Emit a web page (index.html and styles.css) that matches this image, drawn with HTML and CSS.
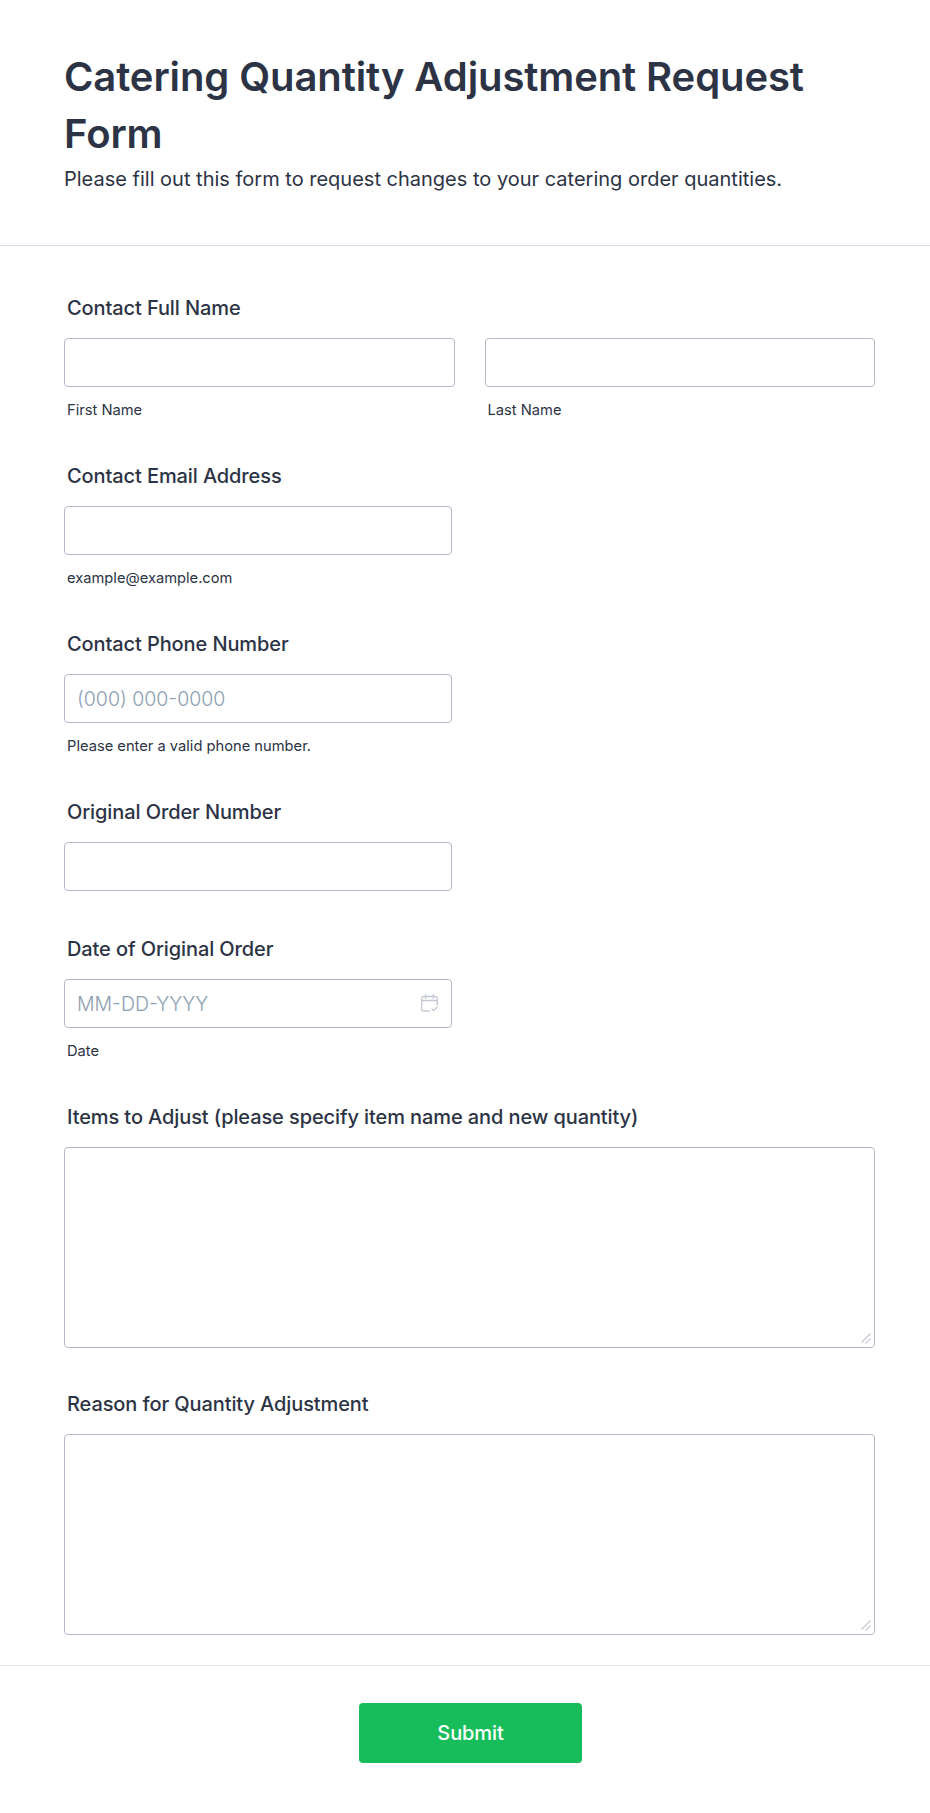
FILE: index.html
```html
<!DOCTYPE html>
<html lang="en">

<head>
  <meta charset="UTF-8">
  <meta name="viewport" content="width=device-width, initial-scale=1.0">
  <title>Catering Quantity Adjustment Request Form</title>
  <link rel="stylesheet" href="styles.css">
</head>

<body>

  <form id="form">
    <div class="header">
      <h1>Catering Quantity Adjustment Request Form</h1>
      <p>Please fill out this form to request changes to your catering order quantities.</p>
    </div>

    <div class="fields">
      <div class="field">
        <label class="label">Contact Full Name</label>
        <div class="name-row">
          <div class="name-col">
            <input type="text" class="input">
            <span class="sub">First Name</span>
          </div>
          <div class="name-col">
            <input type="text" class="input">
            <span class="sub">Last Name</span>
          </div>
        </div>
      </div>

      <div class="field">
        <label class="label">Contact Email Address</label>
        <input type="email" class="input short">
        <span class="sub">example@example.com</span>
      </div>

      <div class="field">
        <label class="label">Contact Phone Number</label>
        <input type="tel" class="input short" placeholder="(000) 000-0000">
        <span class="sub">Please enter a valid phone number.</span>
      </div>

      <div class="field no-sub">
        <label class="label">Original Order Number</label>
        <input type="text" class="input short">
      </div>

      <div class="field">
        <label class="label">Date of Original Order</label>
        <div class="date-wrap">
          <input type="text" class="input short" placeholder="MM-DD-YYYY">
          <svg class="date-icon" width="17" height="18" viewBox="0 0 17 18" fill="none" stroke="#c3c7d4" stroke-width="1.3" stroke-linecap="round" stroke-linejoin="round">
            <path d="M8.500 17H2.500A1.800 1.800 0 0 1 .7 15.200V4.300A1.800 1.800 0 0 1 2.500 2.500h12a1.800 1.800 0 0 1 1.800 1.800V11"/>
            <path d="M.7 6.500h15.600"/>
            <path d="M4.800.7v3.600M12.200.7v3.600"/>
            <path d="M11 15l1.600 1.600 3.400-3.400"/>
          </svg>
        </div>
        <span class="sub">Date</span>
      </div>

      <div class="field">
        <label class="label">Items to Adjust (please specify item name and new quantity)</label>
        <div class="area-wrap">
          <textarea class="input area"></textarea>
          <svg class="grip" width="10" height="11" viewBox="0 0 10 11" fill="none" stroke="#c3c7d4" stroke-width="1.2">
            <path d="M9.500 .5l-9 9M9.500 5.500l-5 5"/>
          </svg>
        </div>
      </div>

      <div class="field">
        <label class="label">Reason for Quantity Adjustment</label>
        <div class="area-wrap">
          <textarea class="input area"></textarea>
          <svg class="grip" width="10" height="11" viewBox="0 0 10 11" fill="none" stroke="#c3c7d4" stroke-width="1.2">
            <path d="M9.500 .5l-9 9M9.500 5.500l-5 5"/>
          </svg>
        </div>
      </div>
    </div>

    <div class="footer">
      <button type="button" class="submit">Submit</button>
    </div>
  </form>

</body>

</html>
```

FILE: styles.css
```css
* {
  box-sizing: border-box;
}

body {
  margin: 0;
  font-family: Inter, "Liberation Sans", sans-serif;
  background-color: #fff;
  color: #2c3345;
}

.header {
  padding: 48px 64px 51px;
  border-bottom: 1px solid #d8dae9;
}

h1 {
  margin: 0;
  font-size: 40px;
  font-weight: 600;
  line-height: 57px;
  letter-spacing: -0.1px;
}

.header p {
  margin: 2px 0 0;
  font-size: 20px;
  line-height: 30px;
}

.fields {
  padding: 48px 55px 30px 64px;
  display: flex;
  flex-direction: column;
  gap: 42px;
}

.field {
  display: flex;
  flex-direction: column;
  align-items: flex-start;
}

.no-sub {
  margin-bottom: 2px;
}

.label {
  margin: 0 0 16px 3px;
  font-size: 20px;
  font-weight: 500;
  line-height: 28px;
  letter-spacing: -0.1px;
}

.input {
  display: block;
  width: 100%;
  height: 49px;
  padding: 0 12px;
  font-family: inherit;
  font-size: 19.500px;
  color: #2c3345;
  background-color: #fff;
  border: 1px solid #b4b9c9;
  border-radius: 4px;
  outline: none;
}

.input::placeholder {
  color: #8c9eb0;
  font-weight: 300;
}

.short {
  width: 388px;
}

.area {
  width: 100%;
  height: 201px;
  resize: none;
}

.area-wrap {
  position: relative;
  width: 100%;
}

.grip {
  position: absolute;
  right: 4px;
  bottom: 4px;
}

.name-row {
  display: flex;
  gap: 30px;
  width: 100%;
}

.name-col {
  flex: 1;
}

.sub {
  display: block;
  margin: 14px 0 0 3px;
  font-size: 14.700px;
  line-height: 19px;
}

.date-wrap {
  position: relative;
}

.date-icon {
  position: absolute;
  top: 15px;
  right: 14px;
}

.footer {
  display: flex;
  justify-content: center;
  padding: 37px 0 49px 11px;
  border-top: 1px solid #e3e5f0;
}

.submit {
  width: 223px;
  height: 60px;
  font-family: inherit;
  font-size: 20px;
  font-weight: 500;
  letter-spacing: -0.1px;
  color: #fff;
  background-color: #18bd5b;
  border: none;
  border-radius: 4px;
  cursor: pointer;
}
```
